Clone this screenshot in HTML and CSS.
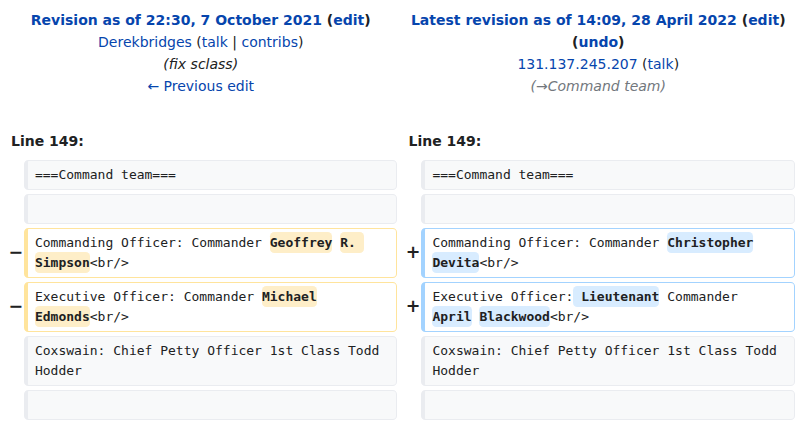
FILE: index.html
```html
<!DOCTYPE html>
<html lang="en">
<head>
<meta charset="utf-8">
<title>Diff</title>
<link rel="stylesheet" href="styles.css">
</head>
<body>
<table class="diff">
  <colgroup>
    <col class="col-marker">
    <col class="col-content">
    <col class="col-marker">
    <col class="col-content">
  </colgroup>
  <tr class="diff-title">
    <td colspan="2" class="diff-otitle">
      <div class="title-line"><strong><a href="#">Revision as of 22:30, 7 October 2021</a> <span class="paren">(<a href="#">edit</a>)</span></strong></div>
      <div class="title-line"><a href="#">Derekbridges</a> <span class="paren">(<a href="#">talk</a> | <a href="#">contribs</a>)</span></div>
      <div class="title-line"><span class="comment">(fix sclass)</span></div>
      <div class="title-line"><a href="#">← Previous edit</a></div>
    </td>
    <td colspan="2" class="diff-ntitle">
      <div class="title-line"><strong><a href="#">Latest revision as of 14:09, 28 April 2022</a> <span class="paren">(<a href="#">edit</a>)</span> <span class="paren">(<a href="#">undo</a>)</span></strong></div>
      <div class="title-line"><a href="#">131.137.245.207</a> <span class="paren">(<a href="#">talk</a>)</span></div>
      <div class="title-line"><span class="autocomment">(→Command team)</span></div>
    </td>
  </tr>
  <tr>
    <td colspan="2" class="diff-lineno">Line 149:</td>
    <td colspan="2" class="diff-lineno">Line 149:</td>
  </tr>
  <tr>
    <td class="diff-marker"></td>
    <td class="diff-line diff-context"><div>===Command team===</div></td>
    <td class="diff-marker"></td>
    <td class="diff-line diff-context"><div>===Command team===</div></td>
  </tr>
  <tr>
    <td class="diff-marker"></td>
    <td class="diff-line diff-context"><br></td>
    <td class="diff-marker"></td>
    <td class="diff-line diff-context"><br></td>
  </tr>
  <tr>
    <td class="diff-marker">−</td>
    <td class="diff-line diff-deletedline"><div>Commanding Officer: Commander <del class="diffchange">Geoffrey</del> <del class="diffchange">R. </del><del class="diffchange">Simpson</del>&lt;br/&gt;</div></td>
    <td class="diff-marker">+</td>
    <td class="diff-line diff-addedline"><div>Commanding Officer: Commander <ins class="diffchange">Christopher</ins> <ins class="diffchange">Devita</ins>&lt;br/&gt;</div></td>
  </tr>
  <tr>
    <td class="diff-marker">−</td>
    <td class="diff-line diff-deletedline"><div>Executive Officer: Commander <del class="diffchange">Michael</del> <del class="diffchange">Edmonds</del>&lt;br/&gt;</div></td>
    <td class="diff-marker">+</td>
    <td class="diff-line diff-addedline"><div>Executive Officer:<ins class="diffchange"> Lieutenant</ins> Commander <ins class="diffchange">April</ins> <ins class="diffchange">Blackwood</ins>&lt;br/&gt;</div></td>
  </tr>
  <tr>
    <td class="diff-marker"></td>
    <td class="diff-line diff-context"><div>Coxswain: Chief Petty Officer 1st Class Todd Hodder</div></td>
    <td class="diff-marker"></td>
    <td class="diff-line diff-context"><div>Coxswain: Chief Petty Officer 1st Class Todd Hodder</div></td>
  </tr>
  <tr>
    <td class="diff-marker"></td>
    <td class="diff-line diff-context"><br></td>
    <td class="diff-marker"></td>
    <td class="diff-line diff-context"><br></td>
  </tr>
</table>
</body>
</html>
```
FILE: styles.css
```css
html, body {
  margin: 0;
  padding: 0;
  background: #ffffff;
}

body {
  font-family: "DejaVu Sans", sans-serif;
  font-size: 14px;
  color: #202122;
}

a {
  color: #0645ad;
  text-decoration: none;
}

.diff {
  width: 799px;
  table-layout: fixed;
  border-collapse: separate;
  border-spacing: 4px;
  margin: 0;
}

.col-marker {
  width: 2%;
}

.col-content {
  width: 48%;
}

.diff td {
  vertical-align: top;
  padding: 0.33em 0.5em;
}

.diff-otitle,
.diff-ntitle {
  text-align: center;
  line-height: 22px;
}

.paren {
  color: #202122;
}

.comment {
  font-style: italic;
}

.autocomment {
  font-style: italic;
  color: #72777d;
}

.diff td.diff-lineno {
  font-weight: bold;
  line-height: 22px;
  padding-top: 25px;
  padding-bottom: 3.6px;
}

.diff td.diff-marker {
  padding: 0.25em;
  text-align: right;
  font-weight: bold;
  font-size: 1.25em;
  line-height: 1.2;
  vertical-align: middle;
  color: #202122;
}

.diff td.diff-line {
  font-family: "DejaVu Sans Mono", monospace;
  font-size: 13px;
  line-height: 20px;
  padding: 4px 12px 4px 7.4px;
  white-space: pre-wrap;
  word-wrap: break-word;
  border-style: solid;
  border-width: 1px 1px 1px 4px;
  border-radius: 0.33em;
  background: #ffffff;
}

.diff-context {
  border-color: #eaecf0;
  color: #202122;
}

.diff td.diff-context {
  background: #f8f9fa;
}

.diff-deletedline {
  border-color: #ffe49c;
}

.diff-addedline {
  border-color: #a3d3ff;
}

.diffchange {
  font-weight: bold;
  text-decoration: none;
  border-radius: 0.33em;
  padding: 0.25em 0;
}

.diff-deletedline .diffchange {
  background: #feeec8;
}

.diff-addedline .diffchange {
  background: #d8ecff;
}
```
